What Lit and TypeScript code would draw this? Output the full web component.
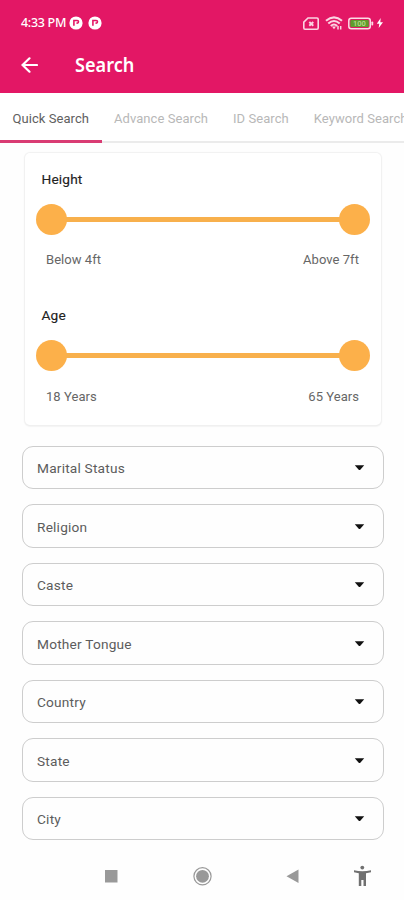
import { LitElement, html, css } from "lit";
import { customElement, property } from "lit/decorators.js";

@customElement("status-bar")
class StatusBar extends LitElement {
  static styles = css`
    :host { display: flex; align-items: center; height: 46px; padding: 0 20px 0 21px; color: #fff; box-sizing: border-box; }
    .time { font: 500 12.5px/16px "Noto Sans", sans-serif; white-space: nowrap; width: 47px; letter-spacing: -0.3px; }
    .badge { width: 14px; height: 14px; margin-left: 1px; margin-right: 4px; }
    .grow { flex: 1; }
    .sim { width: 16px; height: 13px; margin-right: 6px; }
    .wifi { width: 18px; height: 14px; margin-right: 5px; }
    .battery { width: 26px; height: 13px; margin-right: 2px; }
    .bolt { width: 8px; height: 12px; }
  `;
  badge() {
    return html`<svg class="badge" viewBox="0 0 14 14">
      <circle cx="7" cy="7" r="6.6" fill="#fff" />
      <path d="M4.9 9.8V4.5H8.200a1.3 1.3 0 0 1 0 2.600H7.500" fill="none" stroke="#e31765" stroke-width="1.6" />
    </svg>`;
  }
  render() {
    return html`
      <span class="time">4:33 PM</span>${this.badge()}${this.badge()}
      <span class="grow"></span>
      <svg class="sim" viewBox="0 0 16 13" fill="none" stroke="#fbd3e2">
        <path d="M5 1H14a1.2 1.2 0 0 1 1.2 1.2V11a1.2 1.2 0 0 1-1.2 1.2H2A1.2 1.2 0 0 1 .8 11V5.2Z" stroke-width="1.6" />
        <path d="M6.300 5l4 3.800M10.300 5l-4 3.800" stroke-width="1.9" />
      </svg>
      <svg class="wifi" viewBox="0 0 18 14" fill="none" stroke="#fbd3e2" stroke-width="2.100">
        <path d="M1 4.700Q9-2 17 4.700M3.300 7.500Q9 2.500 14.700 7.500M5.800 10Q9 7 12.200 10" />
        <path d="M7 10.500h4l-2 2.700z" fill="#fbd3e2" stroke="none" />
        <path d="M13 10v3.500M15.700 10v3.500" stroke-width="1.500" />
      </svg>
      <svg class="battery" viewBox="0 0 26 13">
        <rect x=".8" y="1.300" width="21.500" height="10.400" rx="2.500" fill="#e31765" stroke="#fbdbe5" stroke-width="1.500" />
        <rect x="2.300" y="2.900" width="18.500" height="7.200" rx="1" fill="#5f9b2d" />
        <rect x="23.400" y="4.500" width="1.800" height="4" rx=".8" fill="#fbdbe5" />
        <text x="11.500" y="9.200" text-anchor="middle" font-family="Roboto, sans-serif" font-size="7.500" font-weight="500" fill="#b9dc8f">100</text>
      </svg>
      <svg class="bolt" viewBox="0 0 8 12"><path d="M4.700 1L.8 6.800H3.300L2.700 11 7 5.200H4.300Z" fill="#fff" /></svg>
    `;
  }
}

@customElement("range-field")
class RangeField extends LitElement {
  @property() name = "";
  @property() low = "";
  @property() high = "";
  static styles = css`
    :host { display: block; height: 136.500px; font-family: Roboto, sans-serif; }
    .name { padding-left: 17px; font-size: 13.700px; line-height: 18px; color: #222; letter-spacing: 0.150px; -webkit-text-stroke: 0.150px #222; }
    .track { display: flex; align-items: center; margin: 16px 11px 0 11px; height: 31px; }
    .thumb { width: 31px; height: 31px; border-radius: 50%; background: #fcb04a; }
    .bar { flex: 1; height: 5px; margin: 0 -1px; background: #f8b04c; }
    .ends { display: flex; justify-content: space-between; margin: 16.500px 21.500px 0; font-size: 13px; line-height: 18px; color: #666; letter-spacing: 0.050px; }
  `;
  render() {
    return html`
      <div class="name">${this.name}</div>
      <div class="track"><span class="thumb"></span><span class="bar"></span><span class="thumb"></span></div>
      <div class="ends"><span>${this.low}</span><span>${this.high}</span></div>
    `;
  }
}

@customElement("select-field")
class SelectField extends LitElement {
  @property() label = "";
  static styles = css`
    :host { display: flex; align-items: center; justify-content: space-between; box-sizing: border-box; height: 43.500px;
      border: 1px solid #cdcdcd; border-radius: 11px; padding: 1.500px 18px 0 14.500px;
      font: 13.700px/18px Roboto, sans-serif; color: #5c5c5c; letter-spacing: 0.200px; }
    .caret { width: 11px; height: 6px; }
  `;
  render() {
    return html`<span>${this.label}</span><svg class="caret" viewBox="0 0 11 6"><path d="M.8.300H10.200L6.500 4.600Q5.500 5.600 4.500 4.600Z" fill="#111" /></svg>`;
  }
}

@customElement("app-root")
class AppRoot extends LitElement {
  static styles = css`
    :host { display: flex; flex-direction: column; width: 404px; height: 900px; overflow: hidden; background: #fefefe; }
    .header { height: 92.500px; background: #e31765; flex: none; }
    .title-row { display: flex; align-items: center; height: 38px; padding-left: 21px; }
    .back { width: 17px; height: 16px; margin-right: 37px; }
    .title { font: 600 20px/26px "Noto Sans", sans-serif; color: #fff; transform: scaleX(0.905); transform-origin: left; }
    .tabs { display: flex; flex: none; height: 50.500px; box-sizing: border-box; overflow: hidden; border-bottom: 2px solid #ebebeb; background: #fff; }
    .tab { flex: none; box-sizing: border-box; height: 50.500px; padding: 0 12.500px; font: 13px/51px Roboto, sans-serif; letter-spacing: 0.060px; color: #b8b8b8; white-space: nowrap; }
    .tab.active { color: #606060; }
    .tabs-wrap { position: relative; flex: none; }
    .indicator { position: absolute; left: 0; bottom: 0; width: 101.500px; height: 3px; background: #d93b73; }
    .card { flex: none; box-sizing: border-box; height: 272px; margin: 10px 23.500px 0 24.500px; padding-top: 16.500px; background: #fff; border-radius: 5px; box-shadow: 0 0 1px 1px #f1f1f1, 0 1px 2px #dedede; }
    .fields { display: flex; flex-direction: column; gap: 15px; margin: 20.500px 20px 0 21.500px; }
    .nav { display: block; width: 404px; height: 48px; margin-top: 11.500px; }
  `;
  render() {
    const fields = ["Marital Status", "Religion", "Caste", "Mother Tongue", "Country", "State", "City"];
    const tabs = ["Quick Search", "Advance Search", "ID Search", "Keyword Search"];
    return html`
      <div class="header">
        <status-bar></status-bar>
        <div class="title-row">
          <svg class="back" viewBox="0 0 17 16" fill="none" stroke="#fff" stroke-width="2.200" stroke-linecap="round"><path d="M8.500 1.300L1.500 8l7 6.700M1.500 8H16" /></svg>
          <span class="title">Search</span>
        </div>
      </div>
      <div class="tabs-wrap">
        <div class="tabs">${tabs.map((t, i) => html`<span class="tab ${i === 0 ? "active" : ""}">${t}</span>`)}</div>
        <div class="indicator"></div>
      </div>
      <div class="card">
        <range-field name="Height" low="Below 4ft" high="Above 7ft"></range-field>
        <range-field name="Age" low="18 Years" high="65 Years"></range-field>
      </div>
      <div class="fields">${fields.map((f) => html`<select-field label=${f}></select-field>`)}</div>
      <svg class="nav" viewBox="0 0 404 48">
        <rect x="105" y="18" width="12.500" height="12.500" fill="#999" />
        <circle cx="202.500" cy="24.300" r="8.600" fill="none" stroke="#999" stroke-width="1.200" />
        <circle cx="202.500" cy="24.300" r="6.400" fill="#999" />
        <path d="M298.500 17.500V31L286.500 24.300Z" fill="#999" />
        <g fill="#707070">
          <circle cx="362.300" cy="15.600" r="1.900" />
          <path d="M354 18.300Q362.300 20.300 371 18.300V20.300L366 21.300V34H363.500V28H361.300V34H358.800V21.300L354 20.300Z" />
        </g>
      </svg>
    `;
  }
}
